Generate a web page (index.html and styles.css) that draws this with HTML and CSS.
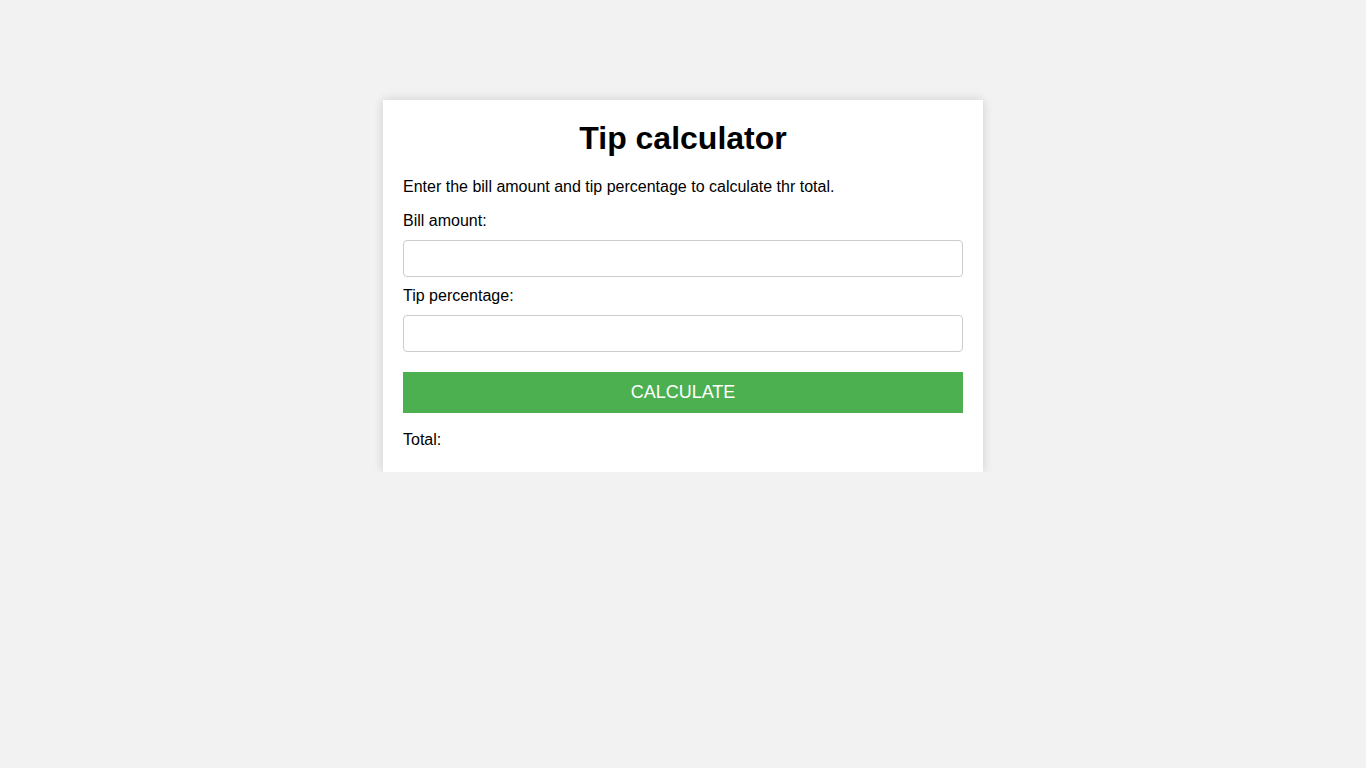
FILE: index.html
```html
<!DOCTYPE html>
<html lang="en">
<head>
<meta charset="utf-8">
<title>Tip calculator</title>
<link rel="stylesheet" href="styles.css">
</head>
<body>
<div class="container">
  <h1 class="title">Tip calculator</h1>
  <p class="intro">Enter the bill amount and tip percentage to calculate thr total.</p>
  <label class="label" for="bill">Bill amount:</label>
  <input class="field" type="number" id="bill">
  <label class="label" for="tip">Tip percentage:</label>
  <input class="field field-last" type="number" id="tip">
  <button class="btn" type="button">CALCULATE</button>
  <div class="total">Total: <span id="total"></span></div>
</div>
</body>
</html>
```

FILE: styles.css
```css
html, body {
  margin: 0;
  padding: 0;
}
body {
  background: #f2f2f2;
  font-family: "Liberation Sans", Arial, sans-serif;
  font-size: 16px;
  color: #000;
}
.container {
  width: 600px;
  box-sizing: border-box;
  margin: 100px auto 0;
  background: #fff;
  padding: 20px 20px 23px;
  box-shadow: 0 0 10px rgba(0, 0, 0, 0.15);
}
.title {
  font-size: 32px;
  font-weight: bold;
  text-align: center;
  margin: 0 0 21px;
  line-height: normal;
}
.intro {
  margin: 0 0 16px;
}
.label {
  display: block;
  margin-bottom: 10px;
}
.field {
  display: block;
  width: 100%;
  box-sizing: border-box;
  height: 37px;
  padding: 8px;
  font-family: inherit;
  font-size: 16px;
  border: 1px solid #ccc;
  border-radius: 4px;
  margin: 0 0 10px;
  background: #fff;
}
.field-last {
  margin-bottom: 20px;
}
.btn {
  display: block;
  width: 100%;
  height: 41px;
  border: none;
  background: #4caf50;
  color: #fff;
  font-family: inherit;
  font-size: 18px;
  padding: 0;
  cursor: pointer;
}
.total {
  margin-top: 18px;
  line-height: normal;
}
```
